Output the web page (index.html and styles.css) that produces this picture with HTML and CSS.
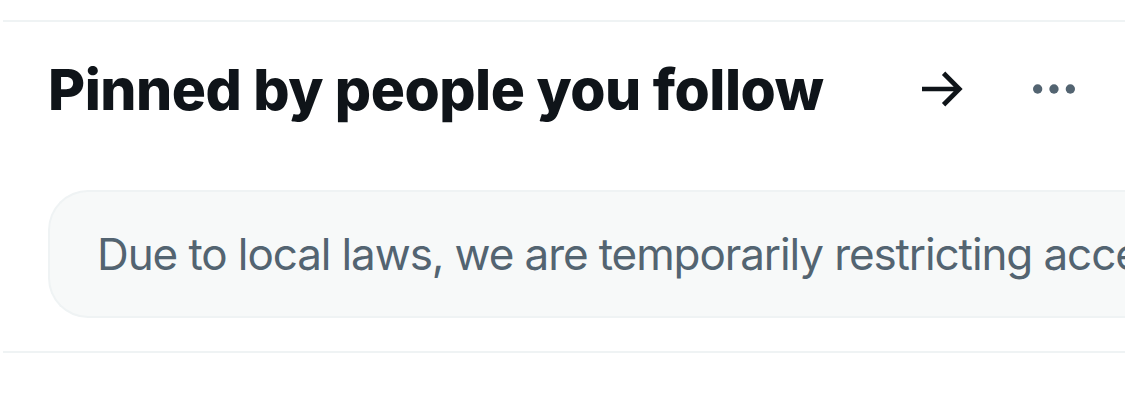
FILE: index.html
```html
<!DOCTYPE html>
<html>
<head>
<meta charset="utf-8">
<link rel="stylesheet" href="styles.css">
</head>
<body>
<div class="section">
  <div class="header">
    <h2 class="title">Pinned by people you follow</h2>
    <div class="actions">
      <svg class="icon arrow" viewBox="0 0 24 24"><path d="M12.957 4.54L20.414 12l-7.457 7.46-1.414-1.42L16.586 13H3v-2h13.586l-5.043-5.04 1.414-1.42z"/></svg>
      <svg class="icon more" viewBox="0 0 24 24"><circle cx="5" cy="12" r="2"/><circle cx="12" cy="12" r="2"/><circle cx="19" cy="12" r="2"/></svg>
    </div>
  </div>
  <div class="notice-wrap">
    <div class="notice">Due to local laws, we are temporarily restricting access to this content.</div>
  </div>
</div>
</body>
</html>
```
FILE: styles.css
```css
html, body {
  margin: 0;
  padding: 0;
  background: #ffffff;
  overflow: hidden;
}
body {
  width: 1125px;
  height: 408px;
  font-family: Inter, "Noto Sans", sans-serif;
}
.section {
  margin-top: 20px;
  margin-left: 3px;
  border-top: 2px solid #eff3f4;
  border-bottom: 2px solid #eff3f4;
  height: 333px;
  box-sizing: border-box;
}
.header {
  display: flex;
  align-items: center;
  height: 134px;
  padding-left: 45px;
  padding-right: 43px;
}
.title {
  margin: 0;
  font-size: 57px;
  font-weight: 800;
  color: #0f1419;
  letter-spacing: -0.5px;
  white-space: nowrap;
  flex: 1;
}
.actions {
  display: flex;
  align-items: center;
  gap: 55px;
}
.icon {
  width: 56px;
  height: 56px;
  display: block;
}
.arrow { fill: #0f1419; }
.more { fill: #536471; }
.notice-wrap {
  padding-left: 45px;
  padding-top: 34px;
}
.notice {
  height: 128px;
  box-sizing: border-box;
  background: #f7f9f9;
  border: 2px solid #eff3f4;
  border-right: none;
  border-radius: 40px 0 0 40px;
  display: flex;
  align-items: center;
  padding-left: 47px;
  font-size: 44px;
  letter-spacing: -1.1px;
  color: #536471;
  white-space: nowrap;
  overflow: hidden;
}
```
